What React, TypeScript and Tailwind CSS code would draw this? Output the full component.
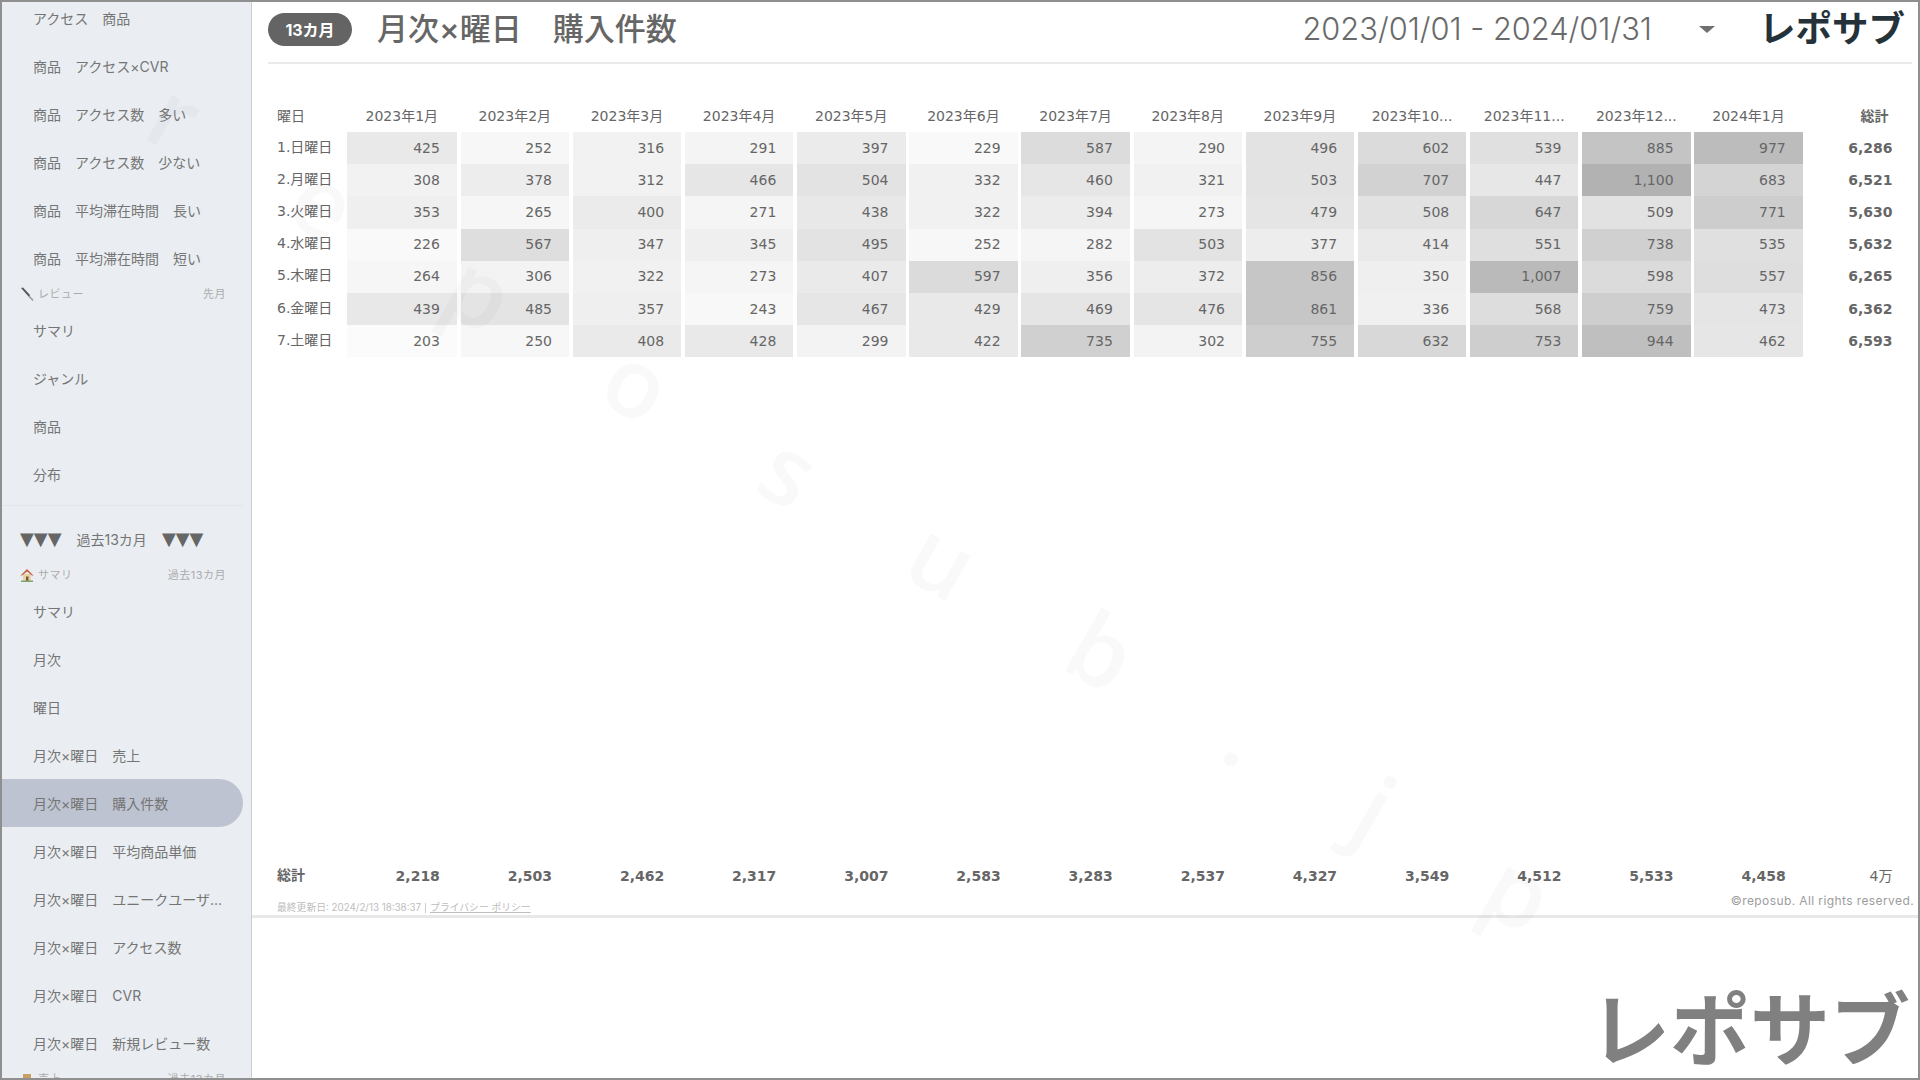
import React from "react";

const sans = "font-['Inter','Noto_Sans_CJK_JP',sans-serif]";

const months = [
  "2023年1月", "2023年2月", "2023年3月", "2023年4月", "2023年5月", "2023年6月", "2023年7月",
  "2023年8月", "2023年9月", "2023年10...", "2023年11...", "2023年12...", "2024年1月",
];

const rows: { label: string; values: number[]; total: string }[] = [
  { label: "1.日曜日", values: [425, 252, 316, 291, 397, 229, 587, 290, 496, 602, 539, 885, 977], total: "6,286" },
  { label: "2.月曜日", values: [308, 378, 312, 466, 504, 332, 460, 321, 503, 707, 447, 1100, 683], total: "6,521" },
  { label: "3.火曜日", values: [353, 265, 400, 271, 438, 322, 394, 273, 479, 508, 647, 509, 771], total: "5,630" },
  { label: "4.水曜日", values: [226, 567, 347, 345, 495, 252, 282, 503, 377, 414, 551, 738, 535], total: "5,632" },
  { label: "5.木曜日", values: [264, 306, 322, 273, 407, 597, 356, 372, 856, 350, 1007, 598, 557], total: "6,265" },
  { label: "6.金曜日", values: [439, 485, 357, 243, 467, 429, 469, 476, 861, 336, 568, 759, 473], total: "6,362" },
  { label: "7.土曜日", values: [203, 250, 408, 428, 299, 422, 735, 302, 755, 632, 753, 944, 462], total: "6,593" },
];

const totals = ["2,218", "2,503", "2,462", "2,317", "3,007", "2,583", "3,283", "2,537", "4,327", "3,549", "4,512", "5,533", "4,458", "4万"];

const gridCols = "grid grid-cols-[66px_110.2px_repeat(12,108.47px)_86px] gap-x-[3.7px]";

function heat(v: number) {
  const g = Math.round(251 - (v - 203) * 0.081);
  return `rgb(${g},${g},${g})`;
}

function NavItem({ label, active }: { label: string; active?: boolean }) {
  return (
    <div
      className={`flex h-[48px] shrink-0 items-center pl-[31px] text-[14px] whitespace-pre text-[#757575] ${
        active ? "mr-[8px] rounded-r-full bg-[#bdc3d0]" : ""
      }`}
    >
      {label}
    </div>
  );
}

function NavHeading({ icon, label, right }: { icon: React.ReactNode; label: string; right: string }) {
  return (
    <div className="flex h-[24px] shrink-0 items-center pl-[17px] pr-[25px] text-[11px] tracking-[0.5px] text-[#acacac]">
      <span className="mr-[4px] flex w-[15px] justify-center">{icon}</span>
      <span>{label}</span>
      <span className="ml-auto">{right}</span>
    </div>
  );
}

function BrushIcon() {
  return (
    <svg width="14" height="14" viewBox="0 0 14 14">
      <path d="M1 1 L3 0.5 L10 8 L9 10 Z" fill="#555" />
      <path d="M9 9 L13 13.5" stroke="#999" strokeWidth="1.5" />
    </svg>
  );
}

function HouseIcon() {
  return (
    <svg width="14" height="14" viewBox="0 0 14 14">
      <rect x="3" y="6" width="8" height="7" fill="#e8d3a8" />
      <rect x="6" y="8.5" width="2.5" height="4.5" fill="#7a5a3a" />
      <path d="M0.5 7.5 L7 1 L13.5 7.5 L12 7.5 L7 3.5 L2 7.5 Z" fill="#c0603f" />
      <rect x="1" y="12.5" width="12" height="1.5" fill="#7fa36a" />
    </svg>
  );
}

function Sidebar() {
  return (
    <aside className="flex h-full w-[250px] shrink-0 flex-col overflow-hidden border-r border-[#c8ced4] bg-[#eaeef2]">
      <div className="-mt-[8px] shrink-0">
        <NavItem label="アクセス　商品" />
        <NavItem label="商品　アクセス×CVR" />
        <NavItem label="商品　アクセス数　多い" />
        <NavItem label="商品　アクセス数　少ない" />
        <NavItem label="商品　平均滞在時間　長い" />
        <NavItem label="商品　平均滞在時間　短い" />
      </div>
      <NavHeading icon={<BrushIcon />} label="レビュー" right="先月" />
      <NavItem label="サマリ" />
      <NavItem label="ジャンル" />
      <NavItem label="商品" />
      <NavItem label="分布" />
      <div className="mr-[8px] mt-[7px] shrink-0 border-t border-[#e2e6ea]" />
      <div className="flex h-[66px] shrink-0 items-center pl-[18px] text-[14px] whitespace-pre text-[#757575]">
        <span className="font-['DejaVu_Sans'] text-[18px] leading-none text-[#666]">▼▼▼</span>
        <span className="mx-[15px]">過去13カ月</span>
        <span className="font-['DejaVu_Sans'] text-[18px] leading-none text-[#666]">▼▼▼</span>
      </div>
      <div className="-mt-[9px] shrink-0">
        <NavHeading icon={<HouseIcon />} label="サマリ" right="過去13カ月" />
      </div>
      <NavItem label="サマリ" />
      <NavItem label="月次" />
      <NavItem label="曜日" />
      <NavItem label="月次×曜日　売上" />
      <NavItem label="月次×曜日　購入件数" active />
      <NavItem label="月次×曜日　平均商品単価" />
      <NavItem label="月次×曜日　ユニークユーザ..." />
      <NavItem label="月次×曜日　アクセス数" />
      <NavItem label="月次×曜日　CVR" />
      <NavItem label="月次×曜日　新規レビュー数" />
      <NavHeading
        icon={<span className="block h-[10px] w-[8px] bg-[#c9a063]" />}
        label="売上"
        right="過去13カ月"
      />
    </aside>
  );
}

function Header() {
  return (
    <header className="ml-[16px] mr-[6px] flex h-[62px] shrink-0 items-center border-b-2 border-[#ebebeb] pb-[5px]">
      <span className="flex h-[33px] w-[84px] items-center justify-center rounded-full bg-[#646464] text-[16px] font-bold text-white">
        13カ月
      </span>
      <h1 className="ml-[25px] text-[31px] font-medium whitespace-pre text-[#666]">月次×曜日　購入件数</h1>
      <span className="ml-auto text-[30.8px] font-light text-[#6a6a6a]">2023/01/01 - 2024/01/31</span>
      <span className="ml-[47px] h-0 w-0 border-x-[8px] border-t-[7px] border-x-transparent border-t-[#707070]" />
      <span className="-mt-[1px] ml-[44px] mr-[7px] text-[36.5px] leading-none font-bold text-[#26323a]">レポサブ</span>
    </header>
  );
}

function HeatTable() {
  return (
    <section className="flex flex-1 flex-col pl-[25px] font-['DejaVu_Sans','Noto_Sans_CJK_JP',sans-serif] text-[14px] text-[#666]">
      <div className={`${gridCols} mb-[3px] mt-[39px] h-[26px] items-center`}>
        <span>曜日</span>
        {months.map((m) => (
          <span key={m} className="text-center">
            {m}
          </span>
        ))}
        <span className="pr-[4px] text-right font-bold">総計</span>
      </div>
      {rows.map((row) => (
        <div key={row.label} className={`${gridCols} h-[32.2px] items-center`}>
          <span className="-mt-[2px]">{row.label}</span>
          {row.values.map((v, i) => (
            <span
              key={i}
              className="flex h-full items-center justify-end pr-[17px]"
              style={{ backgroundColor: heat(v) }}
            >
              {v.toLocaleString("en-US")}
            </span>
          ))}
          <span className="text-right font-bold">{row.total}</span>
        </div>
      ))}
      <div className="flex-1" />
      <div className={`${gridCols} h-[24px] items-center font-bold`}>
        <span className="-mt-[2px]">総計</span>
        {totals.map((t, i) => (
          <span key={i} className={i < 13 ? "pr-[17px] text-right" : "text-right font-normal"}>
            {t}
          </span>
        ))}
      </div>
    </section>
  );
}

function Footer() {
  return (
    <footer className="mr-[4px] flex h-[27px] items-start justify-between pl-[25px]">
      <span className="mt-[13px] flex items-center text-[9.8px] leading-[14px] text-[#bdbdbd]">
        最終更新日: 2024/2/13 18:38:37
        <span className="mx-[4px] h-[10px] border-l border-[#ccc]" />
        <span className="underline">プライバシー ポリシー</span>
      </span>
      <span className="mt-[4px] text-[12px] tracking-[0.4px] text-[#9c9c9c]">©reposub. All rights reserved.</span>
    </footer>
  );
}

export default function App() {
  return (
    <div className={`${sans} relative flex h-screen w-full overflow-hidden border-2 border-[#8f8f8f] bg-white`}>
      <Sidebar />
      <main className="flex h-full min-w-0 flex-1 flex-col">
        <Header />
        <HeatTable />
        <Footer />
        <div className="border-t-[3px] border-[#e8e8e8]" />
        <div className="flex h-[160px] shrink-0 items-end justify-end pr-[8px]">
          <span className="text-[80px] leading-[96px] font-bold text-[#808080]">レポサブ</span>
        </div>
      </main>
      {/* watermark lies over the whole page */}
      <div className="pointer-events-none absolute left-[156px] top-[42px] flex h-[120px] origin-left rotate-[30deg] items-center font-['Open_Sans',sans-serif] text-[96px] font-semibold tracking-[123px] whitespace-nowrap text-black/[0.025]">
        reposub.jp
      </div>
    </div>
  );
}
